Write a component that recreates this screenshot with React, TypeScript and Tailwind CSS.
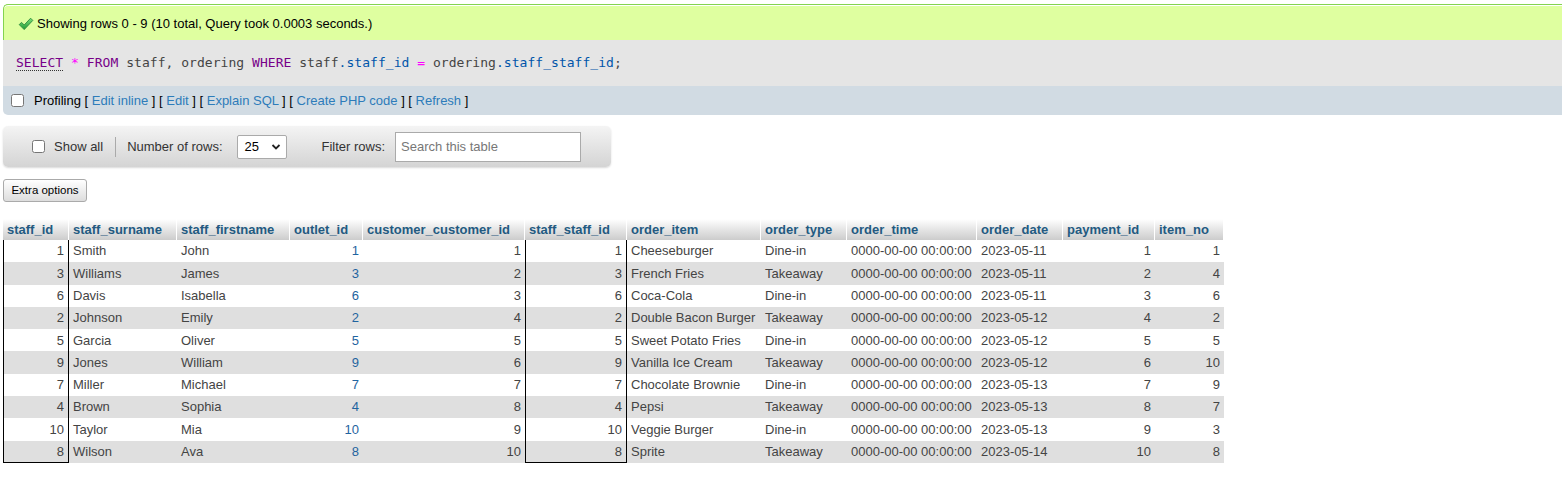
import React from "react";

type Col = { name: string; w: string; align: "l" | "r"; link?: boolean; boxed?: boolean };

const cols: Col[] = [
  { name: "staff_id", w: "w-[66px]", align: "r", boxed: true },
  { name: "staff_surname", w: "w-[108px]", align: "l" },
  { name: "staff_firstname", w: "w-[113px]", align: "l" },
  { name: "outlet_id", w: "w-[73px]", align: "r", link: true },
  { name: "customer_customer_id", w: "w-[162px]", align: "r" },
  { name: "staff_staff_id", w: "w-[102px]", align: "r", boxed: true },
  { name: "order_item", w: "w-[134px]", align: "l" },
  { name: "order_type", w: "w-[86px]", align: "l" },
  { name: "order_time", w: "w-[130px]", align: "l" },
  { name: "order_date", w: "w-[86px]", align: "l" },
  { name: "payment_id", w: "w-[92px]", align: "r" },
  { name: "item_no", w: "w-[69px]", align: "r" },
];

const T = "0000-00-00 00:00:00";
const rows: (string | number)[][] = [
  [1, "Smith", "John", 1, 1, 1, "Cheeseburger", "Dine-in", T, "2023-05-11", 1, 1],
  [3, "Williams", "James", 3, 2, 3, "French Fries", "Takeaway", T, "2023-05-11", 2, 4],
  [6, "Davis", "Isabella", 6, 3, 6, "Coca-Cola", "Dine-in", T, "2023-05-11", 3, 6],
  [2, "Johnson", "Emily", 2, 4, 2, "Double Bacon Burger", "Takeaway", T, "2023-05-12", 4, 2],
  [5, "Garcia", "Oliver", 5, 5, 5, "Sweet Potato Fries", "Dine-in", T, "2023-05-12", 5, 5],
  [9, "Jones", "William", 9, 6, 9, "Vanilla Ice Cream", "Takeaway", T, "2023-05-12", 6, 10],
  [7, "Miller", "Michael", 7, 7, 7, "Chocolate Brownie", "Dine-in", T, "2023-05-13", 7, 9],
  [4, "Brown", "Sophia", 4, 8, 4, "Pepsi", "Takeaway", T, "2023-05-13", 8, 7],
  [10, "Taylor", "Mia", 10, 9, 10, "Veggie Burger", "Dine-in", T, "2023-05-13", 9, 3],
  [8, "Wilson", "Ava", 8, 10, 8, "Sprite", "Takeaway", T, "2023-05-14", 10, 8],
];

function Check() {
  return (
    <svg width="16" height="14" viewBox="0 0 16 14" className="shrink-0">
      <defs>
        <linearGradient id="g" x1="0" y1="0" x2="0" y2="1">
          <stop offset="0" stopColor="#7ee07a" />
          <stop offset="1" stopColor="#1f9a35" />
        </linearGradient>
      </defs>
      <path
        d="M1.2 7.6 L3.6 5.4 L6.2 8 L12.6 1.2 L14.8 3.4 L6.2 12.6 Z"
        fill="url(#g)"
        stroke="#2a8a3a"
        strokeWidth="0.9"
        strokeLinejoin="round"
      />
    </svg>
  );
}

const Link = ({ children }: { children: React.ReactNode }) => (
  <span className="text-[#2d7cba]">{children}</span>
);

export default function App() {
  return (
    <div className="font-['Liberation_Sans',Arial,sans-serif] text-[13px] text-[#333] bg-white w-[1562px] min-h-[477px] overflow-hidden pl-[3px] pt-[4px]">
      {/* success */}
      <div className="h-[36px] border-t border-l border-[#84d34f] rounded-tl-[5px] bg-[#dfffa0] shadow-[inset_0_1px_0_#ffffff] flex items-center pl-[14px] pt-[3px] gap-[3px] text-black">
        <Check />
        <span>Showing rows 0 - 9 (10 total, Query took 0.0003 seconds.)</span>
      </div>
      {/* sql */}
      <div className="h-[46px] bg-[#e5e5e5] flex items-center pl-[13px] font-['DejaVu_Sans_Mono',monospace] text-[13px] tracking-[0.04px] text-[#444] whitespace-pre">
        <span className="text-[#770088] border-b border-dotted border-[#333] leading-[15px]">SELECT</span>
        <span> </span>
        <span className="text-[#ff00ff]">*</span>
        <span> </span>
        <span className="text-[#770088]">FROM</span>
        <span> staff, ordering </span>
        <span className="text-[#770088]">WHERE</span>
        <span> staff</span>
        <span className="text-[#0055aa]">.staff_id</span>
        <span> </span>
        <span className="text-[#ff00ff]">=</span>
        <span> ordering</span>
        <span className="text-[#0055aa]">.staff_staff_id</span>
        <span>;</span>
      </div>
      {/* profiling */}
      <div className="h-[29px] bg-[#d1dbe3] rounded-bl-[5px] flex items-center pl-[8px] text-black">
        <input type="checkbox" className="w-[13px] h-[13px] m-0 mr-[10px]" />
        <span className="whitespace-pre">
          Profiling [ <Link>Edit inline</Link> ] [ <Link>Edit</Link> ] [ <Link>Explain SQL</Link> ] [{" "}
          <Link>Create PHP code</Link> ] [ <Link>Refresh</Link> ]
        </span>
      </div>
      {/* navigation */}
      <div className="mt-[11px] w-[608px] h-[41px] rounded-[5px] bg-gradient-to-b from-[#f4f4f4] to-[#d4d4d4] shadow-[0_1px_2px_rgba(0,0,0,0.15)] flex items-center pl-[29px] text-[#333]">
        <input type="checkbox" className="w-[13px] h-[13px] m-0 mr-[9px]" />
        <span>Show all</span>
        <span className="w-px h-[20px] bg-[#aaa] ml-[12px] mr-[11px]" />
        <span>Number of rows:</span>
        <div className="ml-[14px] w-[50px] h-[24px] bg-white border border-[#aaa] rounded-[2px] flex items-center pl-[7px] pr-[5px] justify-between">
          <span className="text-black">25</span>
          <svg width="10" height="8" viewBox="0 0 10 8">
            <path d="M1.5 2 L5 5.5 L8.5 2" fill="none" stroke="#222" strokeWidth="1.8" />
          </svg>
        </div>
        <span className="ml-[35px]">Filter rows:</span>
        <input
          placeholder="Search this table"
          className="ml-[10px] w-[186px] h-[30px] bg-white border border-[#aaa] px-[5px] text-[13px] placeholder:text-[#777] outline-none font-['Liberation_Sans',Arial,sans-serif]"
        />
      </div>
      {/* extra options */}
      <div className="mt-[12px]">
        <button className="w-[84px] h-[23px] border border-[#aaa] rounded-[3px] bg-gradient-to-b from-[#ffffff] to-[#dddddd] text-[11.5px] text-black flex items-center justify-center">
          Extra options
        </button>
      </div>
      {/* table */}
      <div className="mt-[17px] w-[1221px] text-[#444]">
        <div className="flex h-[21px]">
          {cols.map((c) => (
            <div
              key={c.name}
              className={`${c.w} shrink-0 border-r border-white bg-gradient-to-b from-[#ffffff] to-[#cccccc] font-bold text-[#235a81] flex items-center pl-[4px] whitespace-nowrap`}
            >
              {c.name}
            </div>
          ))}
        </div>
        {rows.map((r, ri) => (
          <div key={ri} className={`flex h-[22.3px] ${ri % 2 === 1 ? "bg-[#dfdfdf]" : "bg-white"}`}>
            {cols.map((c, ci) => {
              const last = ri === rows.length - 1;
              const box = c.boxed
                ? `border-l border-r border-black ${last ? "border-b" : ""}`
                : "";
              return (
                <div
                  key={ci}
                  className={`${c.w} shrink-0 ${box} flex items-center px-[4px] whitespace-nowrap ${
                    c.align === "r" ? "justify-end" : "justify-start"
                  } ${c.link ? "text-[#1f64a0]" : ""}`}
                >
                  {r[ci]}
                </div>
              );
            })}
          </div>
        ))}
      </div>
    </div>
  );
}
